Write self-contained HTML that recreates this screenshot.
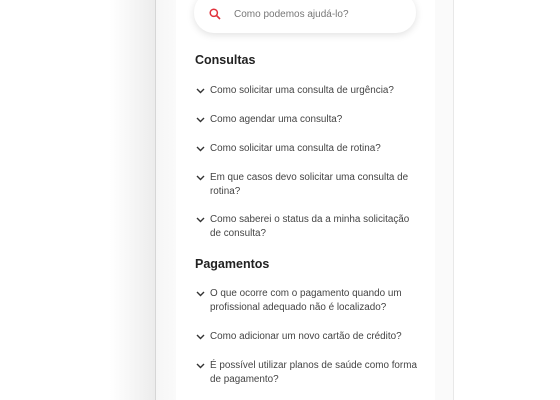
<!DOCTYPE html>
<html><head><meta charset="utf-8"><style>
*{margin:0;padding:0;box-sizing:border-box}
body{width:560px;height:400px;overflow:hidden;position:relative;background:#fff;font-family:"Liberation Sans",sans-serif;color:#333}
.shl{position:absolute;left:110px;top:0;width:45px;height:400px;background:linear-gradient(to right,#fff,#f4f4f4 60%,#ececec)}
.bl{position:absolute;left:155px;top:0;width:1px;height:400px;background:#d6d6d6}
.bzl{position:absolute;left:156px;top:0;width:20px;height:400px;background:linear-gradient(to right,#f6f6f6,#fafafa)}
.bzr{position:absolute;left:435px;top:0;width:18px;height:400px;background:#fafafa}
.br{position:absolute;left:453px;top:0;width:1px;height:400px;background:#e8e8e8}
.search{position:absolute;left:194px;top:-8px;width:222px;height:41px;border-radius:20px;background:#fff;box-shadow:0 2px 8px rgba(0,0,0,.12)}
.search span{position:absolute;left:40px;top:17px;font-size:10px;color:#777}
.search svg{position:absolute;left:15px;top:16px}
h2{position:absolute;left:195px;font-size:12.5px;font-weight:bold;color:#222}
.q{position:absolute;left:210px;font-size:9.9px;line-height:14px;color:#444;width:225px}
.q svg{position:absolute;left:-14px;top:4px}
</style></head><body>
<div class="shl"></div><div class="bl"></div><div class="bzl"></div><div class="bzr"></div><div class="br"></div>
<div class="search"><svg width="12" height="12" viewBox="0 0 12 12"><circle cx="4.8" cy="4.8" r="3.6" fill="none" stroke="#e0323c" stroke-width="1.5"/><path d="M7.5 7.5L11 11" stroke="#e0323c" stroke-width="1.6"/></svg><span>Como podemos ajudá-lo?</span></div>
<h2 style="top:53px">Consultas</h2>
<div class="q" style="top:84px"><svg width="9" height="6" viewBox="0 0 9 6"><path d="M1 1l3.5 3.5L8 1" fill="none" stroke="#333" stroke-width="1.4"/></svg>Como solicitar uma consulta de urgência?</div>
<div class="q" style="top:113px"><svg width="9" height="6" viewBox="0 0 9 6"><path d="M1 1l3.5 3.5L8 1" fill="none" stroke="#333" stroke-width="1.4"/></svg>Como agendar uma consulta?</div>
<div class="q" style="top:142px"><svg width="9" height="6" viewBox="0 0 9 6"><path d="M1 1l3.5 3.5L8 1" fill="none" stroke="#333" stroke-width="1.4"/></svg>Como solicitar uma consulta de rotina?</div>
<div class="q" style="top:171px"><svg width="9" height="6" viewBox="0 0 9 6"><path d="M1 1l3.5 3.5L8 1" fill="none" stroke="#333" stroke-width="1.4"/></svg>Em que casos devo solicitar uma consulta de<br>rotina?</div>
<div class="q" style="top:213px"><svg width="9" height="6" viewBox="0 0 9 6"><path d="M1 1l3.5 3.5L8 1" fill="none" stroke="#333" stroke-width="1.4"/></svg>Como saberei o status da a minha solicitação<br>de consulta?</div>
<h2 style="top:257px">Pagamentos</h2>
<div class="q" style="top:287px"><svg width="9" height="6" viewBox="0 0 9 6"><path d="M1 1l3.5 3.5L8 1" fill="none" stroke="#333" stroke-width="1.4"/></svg>O que ocorre com o pagamento quando um<br>profissional adequado não é localizado?</div>
<div class="q" style="top:330px"><svg width="9" height="6" viewBox="0 0 9 6"><path d="M1 1l3.5 3.5L8 1" fill="none" stroke="#333" stroke-width="1.4"/></svg>Como adicionar um novo cartão de crédito?</div>
<div class="q" style="top:359px"><svg width="9" height="6" viewBox="0 0 9 6"><path d="M1 1l3.5 3.5L8 1" fill="none" stroke="#333" stroke-width="1.4"/></svg>É possível utilizar planos de saúde como forma<br>de pagamento?</div>
</body></html>
